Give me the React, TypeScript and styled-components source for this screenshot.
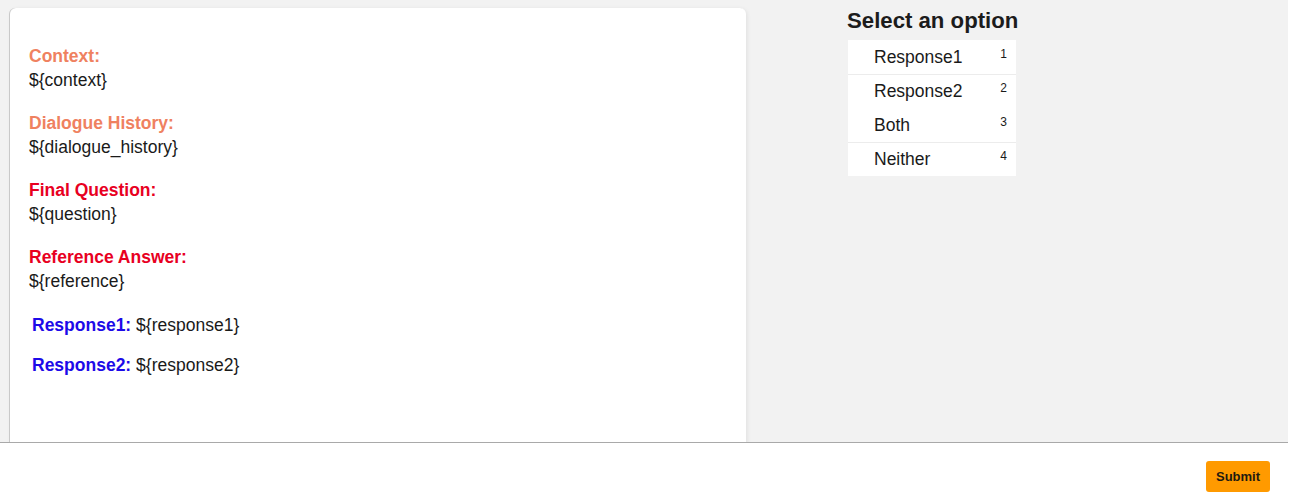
import styled, { createGlobalStyle } from "styled-components";

const GlobalStyle = createGlobalStyle`
  html, body {
    margin: 0;
    padding: 0;
    background: #ffffff;
    font-family: "Liberation Sans", Arial, Helvetica, sans-serif;
    color: #1a1a1a;
  }
`;

type Tone = "orange" | "red" | "blue";

const toneColor: Record<Tone, string> = {
  orange: "#ef8160",
  red: "#e8001f",
  blue: "#1d0ae8",
};

const fields: { label: string; value: string; tone: Tone }[] = [
  { label: "Context:", value: "${context}", tone: "orange" },
  { label: "Dialogue History:", value: "${dialogue_history}", tone: "orange" },
  { label: "Final Question:", value: "${question}", tone: "red" },
  { label: "Reference Answer:", value: "${reference}", tone: "red" },
];

const responses = [
  { label: "Response1:", value: "${response1}" },
  { label: "Response2:", value: "${response2}" },
];

const options = ["Response1", "Response2", "Both", "Neither"];

export default function App() {
  return (
    <>
      <GlobalStyle />
      <Page>
        <Main>
          <Card>
            {fields.map((f) => (
              <Field key={f.label}>
                <Label tone={f.tone}>{f.label}</Label>
                <Value>{f.value}</Value>
              </Field>
            ))}
            <Responses>
              {responses.map((r) => (
                <ResponseRow key={r.label}>
                  <Label tone="blue">{r.label}</Label> {r.value}
                </ResponseRow>
              ))}
            </Responses>
          </Card>
          <Side>
            <Title>Select an option</Title>
            <OptionList>
              {options.map((o, i) => (
                <OptionItem key={o} divided={i === 1 || i === 3}>
                  <span>{o}</span>
                  <Hotkey>{i + 1}</Hotkey>
                </OptionItem>
              ))}
            </OptionList>
          </Side>
        </Main>
        <Footer>
          <SubmitButton>Submit</SubmitButton>
        </Footer>
      </Page>
    </>
  );
}

const Page = styled.div`
  width: 1288px;
  height: 502px;
  display: flex;
  flex-direction: column;
`;

const Main = styled.div`
  height: 443px;
  flex-shrink: 0;
  background: #f2f2f2;
  border-bottom: 1px solid #a9a9a9;
  display: flex;
  align-items: flex-start;
  overflow: hidden;
  padding: 8px 0 0 10px;
  box-sizing: border-box;
`;

const Card = styled.div`
  width: 736px;
  height: 480px;
  flex-shrink: 0;
  background: #ffffff;
  border-radius: 6px 6px 0 0;
  box-shadow: -1px 0 0 #c9c9c9, 1px 1px 4px rgba(0, 0, 0, 0.08);
  padding: 36px 19px 0 19px;
  box-sizing: border-box;
`;

const Field = styled.div`
  margin-bottom: 19px;
  font-size: 17.5px;
  line-height: 24px;
`;

const Label = styled.span<{ tone: Tone }>`
  display: ${(p) => (p.tone === "blue" ? "inline" : "block")};
  font-weight: bold;
  color: ${(p) => toneColor[p.tone]};
`;

const Value = styled.div`
  color: #1a1a1a;
`;

const Responses = styled.div`
  padding: 1px 0 0 3px;
  display: flex;
  flex-direction: column;
  gap: 16px;
`;

const ResponseRow = styled.div`
  font-size: 17.5px;
  line-height: 24px;
  color: #1a1a1a;
`;

const Side = styled.div`
  margin-left: 101px;
  display: flex;
  flex-direction: column;
`;

const Title = styled.div`
  font-size: 22.2px;
  font-weight: bold;
  line-height: 24px;
  margin-top: 1px;
  color: #1c1c1c;
`;

const OptionList = styled.ul`
  list-style: none;
  margin: 7px 0 0 1px;
  padding: 0;
  width: 168px;
  background: #ffffff;
`;

const OptionItem = styled.li<{ divided: boolean }>`
  height: 34px;
  box-sizing: border-box;
  border-top: 1px solid ${(p) => (p.divided ? "#ececec" : "transparent")};
  display: flex;
  justify-content: space-between;
  align-items: center;
  padding: 0 9px 0 26px;
  font-size: 17.5px;
  color: #1a1a1a;
`;

const Hotkey = styled.span`
  font-size: 12px;
  align-self: flex-start;
  margin-top: 6px;
`;

const Footer = styled.div`
  flex: 1;
  display: flex;
  justify-content: flex-end;
  align-items: flex-start;
  padding: 18px 18px 0 0;
  background: #ffffff;
`;

const SubmitButton = styled.button`
  width: 64px;
  height: 31px;
  background: #ff9a00;
  border: none;
  border-radius: 3px;
  font-family: "Liberation Sans", Arial, sans-serif;
  font-size: 13px;
  font-weight: bold;
  color: #1f1a10;
  padding: 0;
  cursor: pointer;
`;
